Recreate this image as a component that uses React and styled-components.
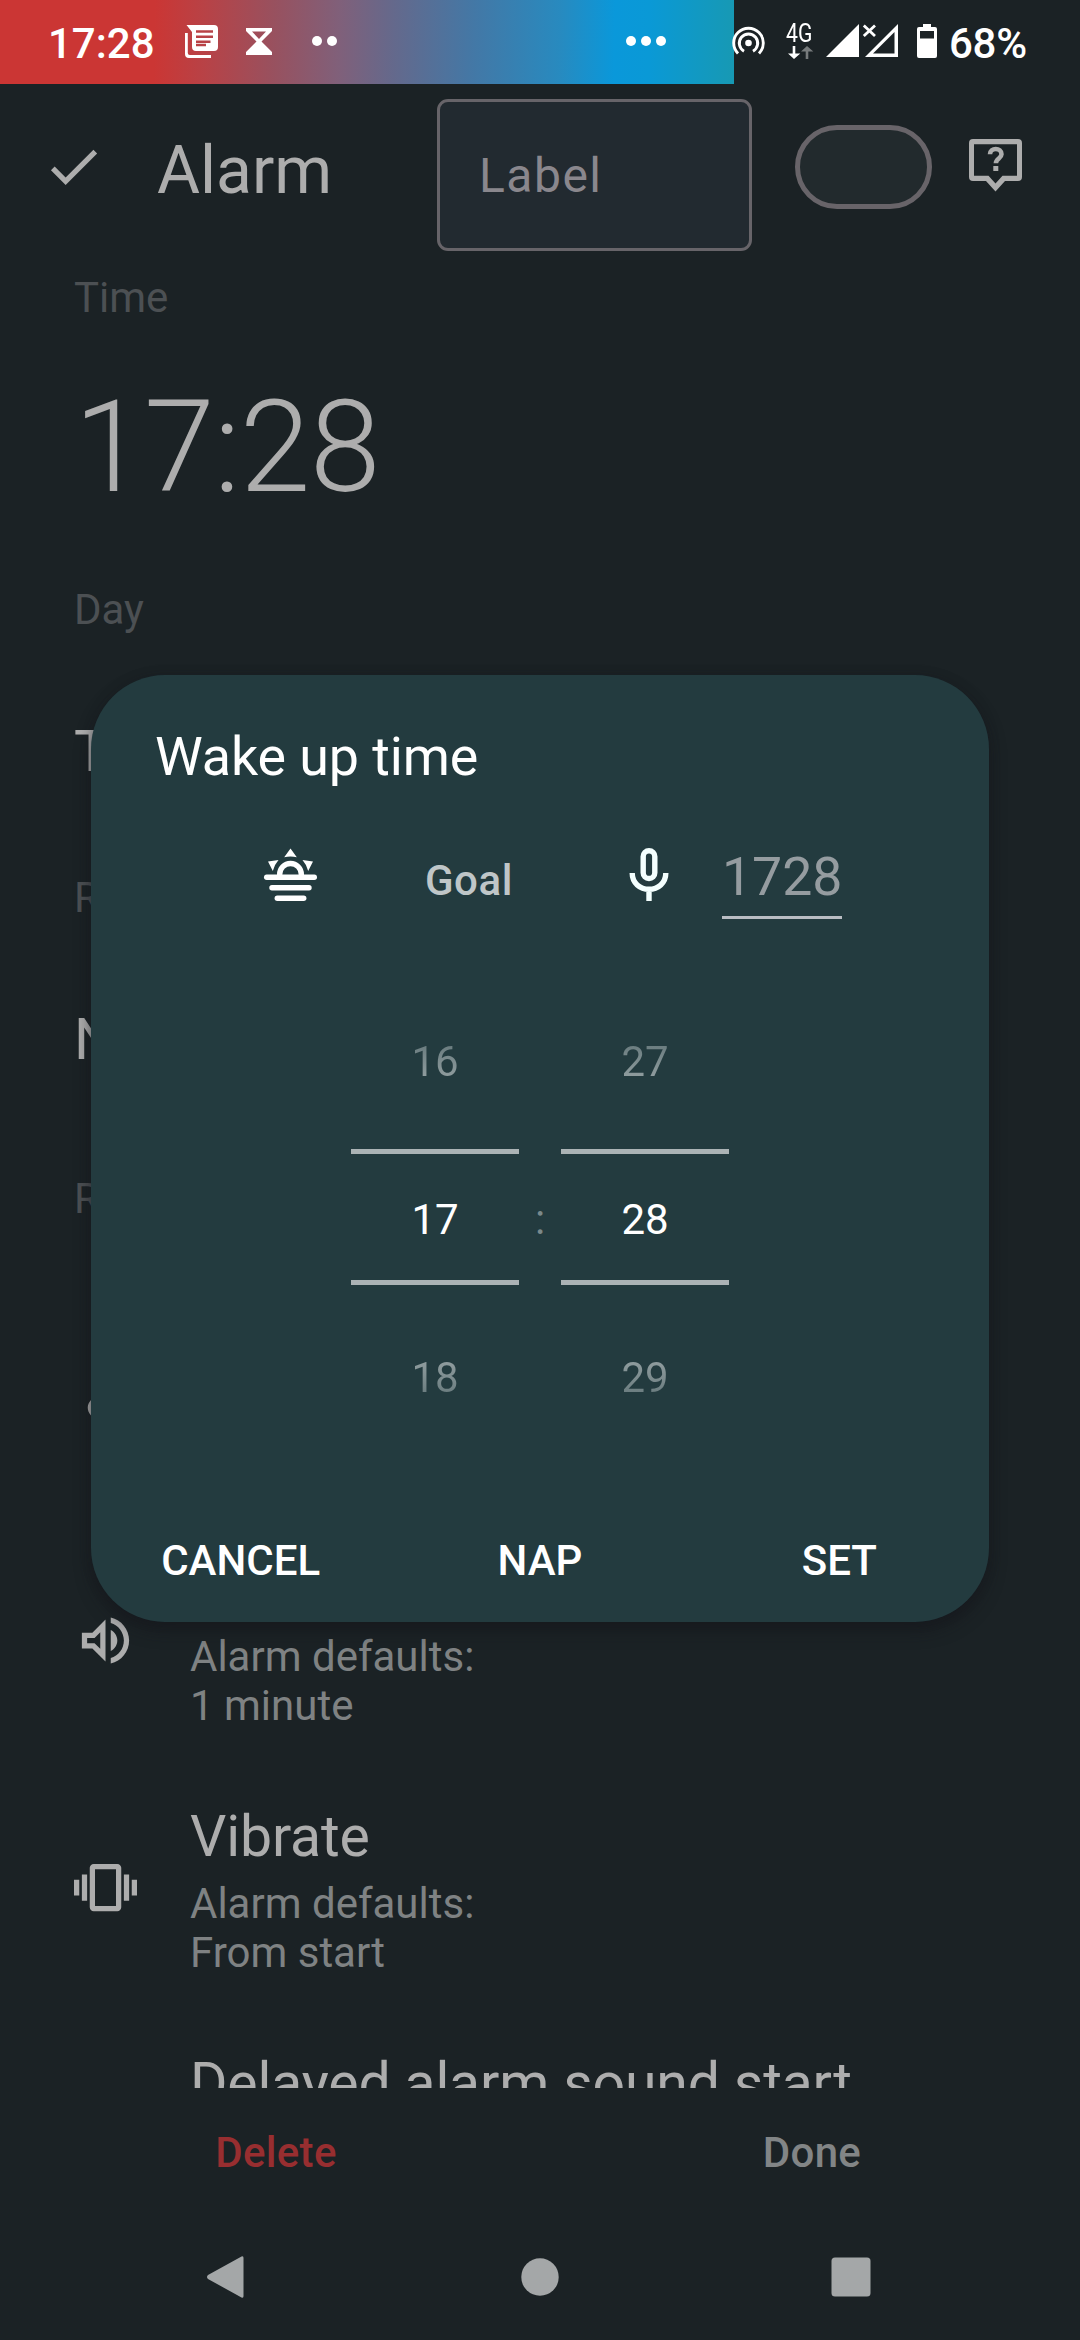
import React from "react";
import styled, { createGlobalStyle } from "styled-components";

const GlobalStyle = createGlobalStyle`
  *, *::before, *::after { box-sizing: border-box; }
  body { margin: 0; background: #1b2225; }
  button, input { font: inherit; color: inherit; background: none; border: 0; padding: 0; margin: 0; }
  svg { display: block; flex: none; }
`;

const Screen = styled.main`
  position: relative;
  display: flex;
  flex-direction: column;
  width: 1080px;
  height: 2340px;
  overflow: hidden;
  background: #1b2225;
  color: #adadad;
  font-family: Roboto, "Noto Sans", sans-serif;
  font-size: 42px;
  line-height: 49px;
`;

/* ---------- status bar ---------- */

const StatusBar = styled.header`
  display: flex;
  flex: none;
  height: 84px;
  color: #fff;
`;

const StatusLeft = styled.div`
  display: flex;
  align-items: flex-start;
  width: 734px;
  padding: 19px 0 0 48px;
  background: linear-gradient(
    91deg,
    #cb3634 0,
    #cb3634 155px,
    #b84246 205px,
    #98515f 275px,
    #80607a 340px,
    #64698c 395px,
    #4378a6 475px,
    #288abf 560px,
    #0a98da 615px,
    #0a99d6 650px,
    #1799b4 734px
  );
`;

const Clock = styled.span`
  width: 137px;
  font-weight: 500;
`;

const StatusGlyph = styled.svg`
  margin-left: ${(p) => p.$ml || 0}px;
  margin-top: ${(p) => p.$mt || 0}px;
`;

const StatusRight = styled.div`
  display: flex;
  align-items: flex-start;
  flex: 1;
  padding-top: 19px;
`;

const Network = styled.div`
  display: flex;
  flex-direction: column;
  width: 28px;
  margin-left: 21px;
`;

const NetworkLabel = styled.span`
  font-size: 25.5px;
  line-height: 26px;
  transform: scaleX(0.83);
  transform-origin: 0 0;
  margin-top: 1px;
  white-space: nowrap;
`;

const Battery = styled.span`
  margin-left: 12px;
  font-weight: 500;
  letter-spacing: -0.3px;
`;

/* ---------- app bar ---------- */

const AppBar = styled.nav`
  display: flex;
  align-items: flex-start;
  flex: none;
  height: 189px;
  padding: 15px 0 0 42px;
`;

const DoneIcon = styled.svg`
  margin-top: 36px;
`;

const Title = styled.h1`
  width: 280px;
  margin: 33px 0 0 52px;
  font-size: 66px;
  line-height: 78px;
  font-weight: 400;
`;

const LabelField = styled.div`
  display: flex;
  align-items: center;
  width: 315px;
  height: 152px;
  padding: 2px 0 0 39px;
  border: 3px solid #676469;
  border-radius: 11px;
  background: #222a30;
  color: #8a878d;
  font-size: 48px;
  line-height: 56px;
  letter-spacing: 1.5px;
`;

const Toggle = styled.div`
  width: 137px;
  height: 84px;
  margin: 26px 0 0 43px;
  border: 5px solid #686469;
  border-radius: 42px;
  background: #222a2d;
`;

const HelpIcon = styled.svg`
  margin: 40px 0 0 37px;
`;

/* ---------- alarm settings ---------- */

const Settings = styled.section`
  display: flex;
  flex-direction: column;
  flex: none;
  height: 1815px;
  overflow: hidden;
  padding-left: 74px;
`;

const SectionLabel = styled.div`
  flex: none;
  height: 49px;
  margin-top: ${(p) => p.$mt || 0}px;
  color: #4c5053;
`;

const BigTime = styled.div`
  flex: none;
  height: 150px;
  margin-top: 51px;
  font-size: 127.5px;
  line-height: 150px;
  font-weight: 300;
  letter-spacing: -0.8px;
`;

const Value = styled.div`
  flex: none;
  height: 68px;
  margin-top: ${(p) => p.$mt || 0}px;
  font-size: 57.75px;
  line-height: 68px;
`;

const SoundIcon = styled.svg`
  margin: 140px 0 0 -2px;
`;

const OptionList = styled.div`
  display: flex;
  flex-direction: column;
  gap: 73px;
  margin-top: 130px;
`;

const Option = styled.div`
  display: flex;
  align-items: flex-start;
  flex: none;
  height: 174px;
`;

const OptionIcon = styled.div`
  width: 116px;
  padding-top: 53px;
`;

const OptionText = styled.div`
  display: flex;
  flex-direction: column;
  height: 174px;
`;

const OptionTitle = styled.div`
  font-size: 57.2px;
  line-height: 68px;
  letter-spacing: -0.18px;
  white-space: nowrap;
`;

const OptionDetail = styled.div`
  margin-top: auto;
  color: #7f8283;
  white-space: pre-line;
`;

/* ---------- bottom ---------- */

const ActionBar = styled.div`
  display: grid;
  grid-template-columns: 1fr 1fr;
  align-items: start;
  flex: none;
  height: 128px;
  padding: 40px 0 0 8px;
`;

const ActionButton = styled.button`
  height: 49px;
  color: ${(p) => (p.$danger ? "#982e30" : "#828586")};
  font-weight: 500;
  letter-spacing: 0.3px;
`;

const SystemNav = styled.footer`
  display: flex;
  justify-content: space-between;
  align-items: center;
  flex: 1;
  padding: 0 209px 3px 204px;
`;

/* ---------- dialog ---------- */

const Dialog = styled.div`
  position: absolute;
  top: 675px;
  left: 91px;
  display: flex;
  flex-direction: column;
  width: 898px;
  height: 947px;
  border-radius: 74px;
  background: #233b3f;
  color: #fff;
  box-shadow: 0 9px 16px rgba(20, 20, 25, 0.5), 0 0 12px rgba(20, 20, 25, 0.18);
`;

const DialogTitle = styled.h2`
  margin: 50px 0 0 64px;
  font-size: 53.8px;
  line-height: 64px;
  font-weight: 400;
  letter-spacing: -0.1px;
`;

const DialogTools = styled.div`
  display: flex;
  align-items: flex-start;
  height: 90px;
  margin-top: 53px;
  padding: 6px 0 0 172px;
`;

const GoalButton = styled.button`
  width: 110px;
  height: 49px;
  margin: 8px 0 0 96px;
  color: #bfc6c8;
  font-weight: 500;
  letter-spacing: 0.6px;
`;

const MicIcon = styled.svg`
  margin-left: 105px;
`;

const TimeInput = styled.div`
  width: 120px;
  height: 71px;
  margin-left: 53px;
  border-bottom: 3px solid #b9bdc3;
  color: #959ca0;
  font-size: 53.6px;
  line-height: 57px;
`;

const Picker = styled.div`
  display: flex;
  justify-content: center;
  margin-top: 105px;
`;

const Wheel = styled.div`
  display: flex;
  flex-direction: column;
  width: 168px;
  text-align: center;
`;

const WheelItem = styled.div`
  height: 49px;
  color: transparent;
  background: linear-gradient(
    ${(p) => (p.$below ? "to top" : "to bottom")},
    #6a7c7f 8px,
    #8f9c9e 40px
  );
  background-clip: text;
  -webkit-background-clip: text;
`;

const WheelCurrent = styled.div`
  height: 136px;
  margin: 63px 0 68px;
  padding-top: 41px;
  border-top: 5px solid #abb3b5;
  border-bottom: 5px solid #abb3b5;
`;

const Colon = styled.div`
  width: 42px;
  padding-top: 158px;
  text-align: center;
  color: #7b898b;
`;

const DialogActions = styled.div`
  display: grid;
  grid-template-columns: repeat(3, 1fr);
  margin-top: 134px;
`;

const DialogButton = styled.button`
  height: 49px;
  font-weight: 500;
`;

function NumberWheel({ values }) {
  return (
    <Wheel>
      <WheelItem>{values[0]}</WheelItem>
      <WheelCurrent>{values[1]}</WheelCurrent>
      <WheelItem $below>{values[2]}</WheelItem>
    </Wheel>
  );
}

function Dots({ count, ml }) {
  const width = count * 15 - 5;
  return (
    <StatusGlyph $ml={ml} $mt={17} width={width} height="10" fill="#fff">
      {Array.from({ length: count }, (_, i) => (
        <circle key={i} cx={5 + i * 15} cy="5" r="5" />
      ))}
    </StatusGlyph>
  );
}

export default function App() {
  return (
    <>
      <GlobalStyle />
      <Screen>
        <StatusBar>
          <StatusLeft>
            <Clock>17:28</Clock>
            <StatusGlyph $mt={6} width="33" height="33" viewBox="0 0 33 33" fill="#fff">
              <path
                fillRule="evenodd"
                d="M1.500 0H29a4 4 0 0 1 4 4V22a4 4 0 0 1-4 4H11a4 4 0 0 1-4-4V7zM11 5.300V7.700H28V5.300zM11 10.600V13H28V10.600zM11 15.500V18H25.500V15.500zM11 18.800V21.200H21V18.800z"
              />
              <path d="M0 8h2.800v20q0 2 2 2H26v3H4q-4 0-4-4z" />
            </StatusGlyph>
            <StatusGlyph $ml={28} $mt={9} width="26" height="27" viewBox="0 0 26 27" fill="#fff">
              <path
                fillRule="evenodd"
                d="M0 0H26V3L15.500 13.500 26 24V27H0V24L10.500 13.500 0 3zM6 3.500L13 11 20 3.500z"
              />
            </StatusGlyph>
            <Dots count={2} ml={40} />
            <Dots count={3} ml={289} />
          </StatusLeft>
          <StatusRight>
            <StatusGlyph
              $ml={-2}
              $mt={7}
              width="33"
              height="30"
              viewBox="0 0 33 30"
              fill="none"
              stroke="#fff"
              strokeWidth="2.900"
            >
              <circle cx="16.500" cy="17" r="3.300" fill="#fff" stroke="none" />
              <path d="M12 25.200A9.200 9.200 0 1 1 21 25.200" />
              <path d="M6 27.500A14.800 14.800 0 1 1 27 27.500" />
            </StatusGlyph>
            <Network>
              <NetworkLabel>4G</NetworkLabel>
              <svg width="28" height="13" viewBox="0 0 28 13">
                <path d="M6.700 0h2.600v7.500h5L8 13 2 7.500h4.700z" fill="#fff" />
                <path d="M19.700 13h2.600V5.500h5L21 0 15 5.500h4.700z" fill="#777b7c" />
              </svg>
            </Network>
            <StatusGlyph $ml={12} $mt={5} width="72" height="34" viewBox="0 0 72 34">
              <path d="M0 33L33 0V33z" fill="#fff" />
              <path
                fillRule="evenodd"
                d="M39 33L72 0V33zM47 29.500H68.500V8z"
                fill="#fff"
              />
              <path d="M37.800 1.500L49 12M49 1.500L37.800 12" stroke="#fff" strokeWidth="2.800" />
            </StatusGlyph>
            <StatusGlyph $ml={19} $mt={5} width="20" height="34" viewBox="0 0 20 34" fill="#fff">
              <path
                fillRule="evenodd"
                d="M6 0h8v3h4q2 0 2 2v27q0 2-2 2H2q-2 0-2-2V5q0-2 2-2h4zM3 7v7.500h14V7z"
              />
            </StatusGlyph>
            <Battery>68%</Battery>
          </StatusRight>
        </StatusBar>

        <AppBar>
          <DoneIcon width="63" height="63" viewBox="0 0 24 24" fill="#adadad">
            <path d="M9 16.170L4.830 12l-1.420 1.410L9 19 21 7l-1.410-1.410z" />
          </DoneIcon>
          <Title>Alarm</Title>
          <LabelField>Label</LabelField>
          <Toggle />
          <HelpIcon width="53" height="53" viewBox="0 0 53 53" fill="#adadad">
            <path
              fillRule="evenodd"
              d="M4 0H49q4 0 4 4V38q0 4-4 4H36L26.500 52.500 17 42H4q-4 0-4-4V4q0-4 4-4zM5 5.300V36.700H19.500L26.500 44.500 33.500 36.700H48V5.300z"
            />
            <path
              d="M21 15.300c0-7 11.500-7 11.500 0 0 4-5.600 4.400-5.600 8.900"
              fill="none"
              stroke="#adadad"
              strokeWidth="4.600"
            />
            <rect x="24.300" y="27" width="5" height="5" />
          </HelpIcon>
        </AppBar>

        <Settings>
          <SectionLabel>Time</SectionLabel>
          <BigTime>17:28</BigTime>
          <SectionLabel $mt={62}>Day</SectionLabel>
          <Value $mt={83}>T</Value>
          <SectionLabel $mt={88}>R</SectionLabel>
          <Value $mt={83}>N</Value>
          <SectionLabel $mt={101}>R</SectionLabel>
          <SoundIcon width="63" height="63" viewBox="0 0 24 24" fill="#adadad">
            <path d="M12 3v10.550c-.590-.340-1.270-.550-2-.550-2.210 0-4 1.790-4 4s1.790 4 4 4 4-1.790 4-4V7h4V3h-6z" />
          </SoundIcon>
          <OptionList>
            <Option>
              <OptionIcon>
                <svg width="63" height="63" viewBox="0 0 24 24" fill="#adadad">
                  <path d="M3 9v6h4l5 5V4L7 9H3zm7-.170v6.340L7.830 13H5v-2h2.830L10 8.830zM16.500 12c0-1.770-1.020-3.290-2.500-4.030v8.050c1.480-.730 2.500-2.250 2.500-4.020zM14 3.230v2.060c2.890.860 5 3.540 5 6.710s-2.110 5.850-5 6.710v2.060c4.010-.910 7-4.490 7-8.770s-2.990-7.860-7-8.770z" />
                </svg>
              </OptionIcon>
              <OptionText>
                <OptionDetail>{"Alarm defaults:\n1 minute"}</OptionDetail>
              </OptionText>
            </Option>
            <Option>
              <OptionIcon>
                <svg width="63" height="63" viewBox="0 0 24 24" fill="#adadad">
                  <path d="M0 15h2V9H0v6zm3 2h2V7H3v10zm19-8v6h2V9h-2zm-3 8h2V7h-2v10zM16.500 3h-9C6.670 3 6 3.670 6 4.500v15c0 .830.670 1.500 1.500 1.500h9c.830 0 1.500-.670 1.500-1.500v-15c0-.830-.670-1.500-1.500-1.500zM16 19H8V5h8v14z" />
                </svg>
              </OptionIcon>
              <OptionText>
                <OptionTitle>Vibrate</OptionTitle>
                <OptionDetail>{"Alarm defaults:\nFrom start"}</OptionDetail>
              </OptionText>
            </Option>
            <Option>
              <OptionIcon />
              <OptionText>
                <OptionTitle>Delayed alarm sound start</OptionTitle>
              </OptionText>
            </Option>
          </OptionList>
        </Settings>

        <ActionBar>
          <ActionButton $danger>Delete</ActionButton>
          <ActionButton>Done</ActionButton>
        </ActionBar>
        <SystemNav>
          <svg width="45" height="44" viewBox="0 0 45 44" fill="#a4a7a8">
            <path d="M37.500 1.500Q39.500 .500 39.500 3V41Q39.500 43.500 37.500 42.500L4 24Q2 22 4 20z" />
          </svg>
          <svg width="38" height="38" viewBox="0 0 38 38" fill="#a4a7a8">
            <circle cx="19" cy="19" r="18.700" />
          </svg>
          <svg width="40" height="40" viewBox="0 0 40 40" fill="#a4a7a8">
            <rect x="0.500" y="0.500" width="39" height="39" rx="3.500" />
          </svg>
        </SystemNav>

        <Dialog role="dialog">
          <DialogTitle>Wake up time</DialogTitle>
          <DialogTools>
            <svg width="55" height="54" viewBox="0 0 55 54" fill="#fff">
              <path d="M27.500 .500L33.800 9.200Q27.500 7.700 21.200 9.200z" />
              <path d="M5 13.400L15.500 12Q11.500 16.500 9.800 23z" />
              <path d="M50 13.400L39.500 12Q43.500 16.500 45.200 23z" />
              <path
                d="M16.700 28V26.300a10.800 10.800 0 0 1 21.600 0V28"
                fill="none"
                stroke="#fff"
                strokeWidth="5.400"
              />
              <rect x="1" y="26.500" width="53" height="5.500" rx="2.700" />
              <rect x="6.300" y="37" width="42.400" height="5.500" rx="2.700" />
              <rect x="11.600" y="47.500" width="31.800" height="5.500" rx="2.700" />
            </svg>
            <GoalButton>Goal</GoalButton>
            <MicIcon
              width="40"
              height="53"
              viewBox="0 0 40 53"
              fill="none"
              stroke="#f4fffe"
              strokeWidth="5.400"
            >
              <rect x="14.200" y="2.700" width="11.600" height="27.800" rx="5.800" />
              <path d="M3.200 25C3.200 35 11 41.300 20 41.300S36.800 35 36.800 25M20 41V53" />
            </MicIcon>
            <TimeInput>1728</TimeInput>
          </DialogTools>
          <Picker>
            <NumberWheel values={["16", "17", "18"]} />
            <Colon>:</Colon>
            <NumberWheel values={["27", "28", "29"]} />
          </Picker>
          <DialogActions>
            <DialogButton>CANCEL</DialogButton>
            <DialogButton>NAP</DialogButton>
            <DialogButton>SET</DialogButton>
          </DialogActions>
        </Dialog>
      </Screen>
    </>
  );
}
